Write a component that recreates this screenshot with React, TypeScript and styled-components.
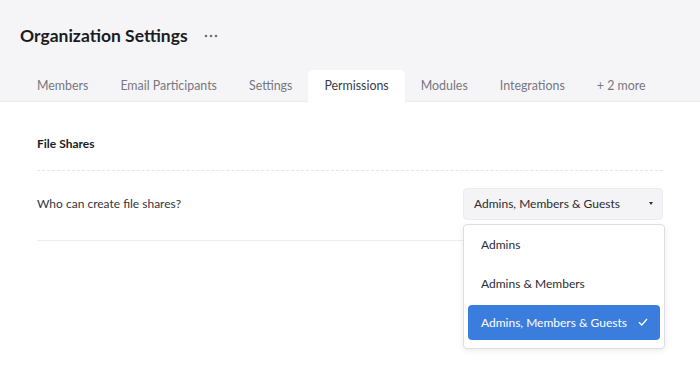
import styled, { createGlobalStyle } from 'styled-components';

const GlobalStyle = createGlobalStyle`
  * { box-sizing: border-box; }
  body {
    margin: 0;
    background: #ffffff;
    font-family: Lato, "Open Sans", sans-serif;
    color: #2b2b33;
  }
`;

const tabs = ['Members', 'Email Participants', 'Settings', 'Permissions', 'Modules', 'Integrations', '+ 2 more'];
const options = ['Admins', 'Admins & Members', 'Admins, Members & Guests'];

function App() {
  const active = 'Permissions';
  const selected = 'Admins, Members & Guests';

  return (
    <Page>
      <GlobalStyle />
      <Header>
        <TitleRow>
          <Title>Organization Settings</Title>
          <MoreButton aria-label="More">
            <svg width="14" height="4" viewBox="0 0 14 4">
              <circle cx="2" cy="2" r="1.3" fill="#707078" />
              <circle cx="7" cy="2" r="1.3" fill="#707078" />
              <circle cx="12" cy="2" r="1.3" fill="#707078" />
            </svg>
          </MoreButton>
        </TitleRow>
        <Tabs>
          {tabs.map((t) => (
            <Tab key={t} $active={t === active}>
              {t}
            </Tab>
          ))}
        </Tabs>
      </Header>

      <Content>
        <SectionTitle>File Shares</SectionTitle>
        <SettingRow>
          <Label>Who can create file shares?</Label>
          <SelectWrap>
            <SelectButton>
              <span>{selected}</span>
              <Caret />
            </SelectButton>
            <Menu>
              {options.map((o) => (
                <Option key={o} $selected={o === selected}>
                  <span>{o}</span>
                  {o === selected && (
                    <svg width="10" height="8" viewBox="0 0 10 8">
                      <path d="M1 4.2 L3.8 7 L9 1" fill="none" stroke="#ffffff" strokeWidth="1.3" />
                    </svg>
                  )}
                </Option>
              ))}
            </Menu>
          </SelectWrap>
        </SettingRow>
      </Content>
    </Page>
  );
}

export default App;

const Page = styled.div`
  width: 700px;
  height: 385px;
  overflow: hidden;
`;

const Header = styled.div`
  background: #f5f5f7;
  padding-left: 21px;
  border-bottom: 1px solid #ececf0;
`;

const TitleRow = styled.div`
  display: flex;
  align-items: center;
  height: 70px;
`;

const Title = styled.h1`
  margin: 0 0 0 -1px;
  font-size: 17.5px;
  font-weight: 700;
  color: #1b1b22;
`;

const MoreButton = styled.span`
  display: flex;
  align-items: center;
  margin-left: 16px;
  margin-top: 1px;
`;

const Tabs = styled.div`
  display: flex;
  height: 31px;
`;

const Tab = styled.div<{ $active?: boolean }>`
  display: flex;
  align-items: center;
  padding: 0 16px 1px;
  font-size: 12.4px;
  white-space: nowrap;
  color: ${({ $active }) => ($active ? '#3a3a44' : '#777780')};
  background: ${({ $active }) => ($active ? '#ffffff' : 'transparent')};
  border-radius: 5px 5px 0 0;
  margin-bottom: -1px;
`;

const Content = styled.div`
  padding: 0 37px;
`;

const SectionTitle = styled.div`
  height: 69px;
  padding-top: 34px;
  font-size: 12px;
  font-weight: 700;
  color: #1b1b22;
  border-bottom: 1px dashed #e4e4ea;
`;

const SettingRow = styled.div`
  display: flex;
  justify-content: space-between;
  align-items: center;
  height: 70px;
  padding-bottom: 4px;
  border-bottom: 1px solid #ececf2;
`;

const Label = styled.span`
  font-size: 12px;
  color: #34343c;
`;

const SelectWrap = styled.div`
  position: relative;
  width: 200px;
`;

const SelectButton = styled.div`
  display: flex;
  justify-content: space-between;
  align-items: center;
  height: 32px;
  padding: 0 9px 0 10px;
  background: #f4f4f6;
  border: 1px solid #ededf1;
  border-radius: 4px;
  font-size: 12px;
  white-space: nowrap;
  color: #2b2b33;
`;

const Caret = styled.span`
  width: 0;
  height: 0;
  border-left: 2.5px solid transparent;
  border-right: 2.5px solid transparent;
  border-top: 3px solid #2b2b33;
`;

const Menu = styled.div`
  position: absolute;
  top: 36px;
  left: 0;
  width: 202px;
  padding: 2px 4px 8px;
  background: #ffffff;
  border: 1px solid #dcdce2;
  border-radius: 4px;
  box-shadow: 0 2px 6px rgba(0, 0, 0, 0.08);
`;

const Option = styled.div<{ $selected?: boolean }>`
  display: flex;
  justify-content: space-between;
  align-items: center;
  height: 35px;
  padding: 0 12px 0 13px;
  border-radius: 4px;
  font-size: 12px;
  white-space: nowrap;
  color: ${({ $selected }) => ($selected ? '#ffffff' : '#2b2b33')};
  background: ${({ $selected }) => ($selected ? '#3b7ddd' : 'transparent')};
  & + & {
    margin-top: 4px;
  }
`;
